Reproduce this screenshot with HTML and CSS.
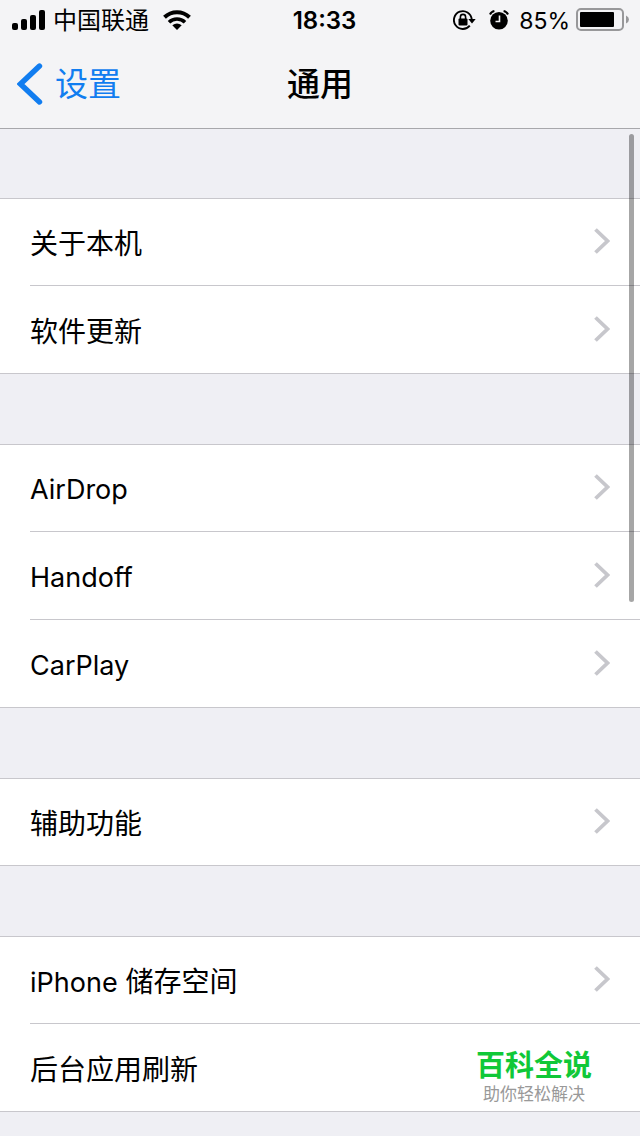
FILE: index.html
```html
<!DOCTYPE html>
<html lang="zh-CN">
<head>
<meta charset="utf-8">
<meta name="viewport" content="width=device-width">
<title>通用</title>
<link rel="stylesheet" href="styles.css">
</head>
<body>
<svg class="defs" aria-hidden="true">
  <symbol id="chevron" viewBox="0 0 16 26"><path d="M1.5 1.5 13.5 13 1.5 24.5" fill="none" stroke="currentColor" stroke-width="3.8"/></symbol>
</svg>
<header class="header">
  <div class="status">
    <div class="status-side">
      <svg class="signal" viewBox="0 0 34 20" aria-hidden="true">
        <rect x="0" y="13" width="6" height="7" rx="2"/><rect x="9" y="9" width="6" height="11" rx="2"/><rect x="18" y="5" width="6" height="15" rx="2"/><rect x="27" y="0" width="6" height="20" rx="2"/>
      </svg>
      <span class="carrier">中国联通</span>
      <svg class="wifi" viewBox="0 0 28 20" aria-hidden="true">
        <path d="M1.5 7.3A18 18 0 0 1 26.5 7.3" fill="none" stroke="#000" stroke-width="4"/>
        <path d="M6 12.2A11.5 11.5 0 0 1 22 12.2" fill="none" stroke="#000" stroke-width="3.6"/>
        <path d="M9.3 15.3Q14 11.5 18.7 15.3L14 20Z"/>
      </svg>
    </div>
    <time class="clock">18:33</time>
    <div class="status-side status-right">
      <svg class="lock" viewBox="0 0 23 20" aria-hidden="true">
        <path d="M16.8 15.6A8.9 8.9 0 1 1 18.7 9.2" fill="none" stroke="#000" stroke-width="1.9"/>
        <path d="M15.3 9h7.4L19 13.4Z"/>
        <rect x="5.5" y="8.6" width="9" height="6.8" rx="1"/>
        <path d="M7.4 9V7a2.6 2.6 0 0 1 5.2 0v2" fill="none" stroke="#000" stroke-width="1.6"/>
      </svg>
      <svg class="alarm" viewBox="0 0 20 20" aria-hidden="true">
        <circle cx="10" cy="10.8" r="8.8"/>
        <path d="M10.5 5.5V11.5H6.5" fill="none" stroke="#f4f4f6" stroke-width="1.6"/>
        <path d="M1 4.5Q2.2 1.6 5.4 1M19 4.5Q17.8 1.6 14.6 1" fill="none" stroke="#000" stroke-width="2"/>
      </svg>
      <span class="percent">85%</span>
      <svg class="battery" viewBox="0 0 53 24" aria-hidden="true">
        <rect x="1" y="1" width="46" height="21" rx="4" fill="none" stroke="#98989a" stroke-width="2"/>
        <rect x="4" y="4" width="34" height="15" rx="1"/>
        <path d="M50 7.5Q53 9 53 11.5T50 15.5Z" fill="#98989a"/>
      </svg>
    </div>
  </div>
  <nav class="nav">
    <a class="back" href="#">
      <svg class="back-icon" viewBox="0 0 26 42" aria-hidden="true"><path d="M22.5 3 3.5 21 22.5 39" fill="none" stroke="currentColor" stroke-width="5.4" stroke-linecap="round"/></svg>
      <span>设置</span>
    </a>
    <h1 class="title">通用</h1>
  </nav>
</header>
<main>
  <ul class="group">
    <li class="item"><a class="row" href="#"><span>关于本机</span><svg class="chevron" aria-hidden="true"><use href="#chevron"/></svg></a></li>
    <li class="item"><a class="row" href="#"><span>软件更新</span><svg class="chevron" aria-hidden="true"><use href="#chevron"/></svg></a></li>
  </ul>
  <ul class="group">
    <li class="item"><a class="row" href="#"><span class="latin">AirDrop</span><svg class="chevron" aria-hidden="true"><use href="#chevron"/></svg></a></li>
    <li class="item"><a class="row" href="#"><span class="latin">Handoff</span><svg class="chevron" aria-hidden="true"><use href="#chevron"/></svg></a></li>
    <li class="item"><a class="row" href="#"><span class="latin">CarPlay</span><svg class="chevron" aria-hidden="true"><use href="#chevron"/></svg></a></li>
  </ul>
  <ul class="group">
    <li class="item"><a class="row" href="#"><span>辅助功能</span><svg class="chevron" aria-hidden="true"><use href="#chevron"/></svg></a></li>
  </ul>
  <ul class="group">
    <li class="item"><a class="row" href="#"><span><span class="latin-word">iPhone</span> 储存空间</span><svg class="chevron" aria-hidden="true"><use href="#chevron"/></svg></a></li>
    <li class="item">
      <a class="row" href="#"><span>后台应用刷新</span></a>
      <div class="brand"><strong class="brand-name">百科全说</strong><span class="brand-line">助你轻松解决</span></div>
    </li>
  </ul>
</main>
<div class="scroll-thumb"></div>
</body>
</html>
```
FILE: styles.css
```css
* {
  box-sizing: border-box;
}

body {
  position: relative;
  margin: 0;
  min-height: 100vh;
  background: #efeff4;
  color: #000;
  font-family: Inter, "Noto Sans CJK SC", sans-serif;
  font-size: 28px;
}

a {
  color: inherit;
  text-decoration: none;
}

svg {
  display: block;
  flex: none;
}

.defs {
  position: absolute;
  width: 0;
  height: 0;
}

.header {
  height: 128px;
  background: #f4f4f6;
  box-shadow: 0 1px 0 #a7a7ab;
}

.status {
  display: grid;
  grid-template-columns: 1fr auto 1fr;
  align-items: center;
  height: 40px;
  padding: 0 11px 0 12px;
  font-size: 24px;
  line-height: 38px;
}

.status-side {
  display: flex;
  align-items: center;
}

.status-right {
  justify-content: flex-end;
}

.signal {
  width: 34px;
  height: 20px;
  margin-right: 7px;
}

.carrier,
.clock,
.percent {
  padding-top: 2px;
}

.wifi {
  width: 28px;
  height: 20px;
  margin-left: 14px;
}

.clock {
  padding-left: 8px;
  font-weight: 600;
}

.percent {
  font-size: 23px;
}

.lock {
  width: 23px;
  height: 20px;
  margin-right: 13px;
}

.alarm {
  width: 20px;
  height: 20px;
  margin-right: 10px;
}

.battery {
  width: 53px;
  height: 24px;
  margin-left: 6px;
}

.nav {
  display: grid;
  grid-template-columns: 1fr auto 1fr;
  align-items: center;
  height: 88px;
  padding: 0 17px;
  font-size: 33px;
  line-height: 48px;
}

.back {
  display: flex;
  align-items: center;
  gap: 12px;
  color: #117df0;
}

.back-icon {
  width: 26px;
  height: 42px;
}

.title {
  margin: 0;
  font-size: 33px;
  font-weight: 500;
}

.group {
  margin: 70px 0 0;
  padding: 0;
  list-style: none;
  background: #fff;
}

.item {
  position: relative;
  height: 88px;
  padding-left: 30px;
}

.item:first-child {
  border-top: 1px solid #c8c7cc;
}

.item:last-child {
  border-bottom: 1px solid #c8c7cc;
}

.row {
  display: flex;
  align-items: center;
  justify-content: space-between;
  height: 100%;
  padding: 0 30px 2px 0;
}

.item:not(:last-child) .row {
  border-bottom: 1px solid #c8c7cc;
}

.row > span {
  padding-top: 2px;
}

.row > .latin {
  padding-top: 5px;
  font-size: 27px;
}

.latin-word {
  font-size: 27px;
}

.chevron {
  width: 16px;
  height: 26px;
  color: #c7c7cc;
}

.brand {
  position: absolute;
  right: 48px;
  bottom: 6px;
  display: flex;
  flex-direction: column;
  align-items: center;
}

.brand-name {
  color: #10c838;
  font-size: 29px;
  line-height: 34px;
}

.brand-line {
  color: #999;
  font-size: 17px;
  line-height: 22px;
}

.scroll-thumb {
  position: absolute;
  top: 134px;
  right: 6px;
  width: 5px;
  height: 468px;
  border-radius: 3px;
  background: rgba(0, 0, 0, 0.35);
}
```
